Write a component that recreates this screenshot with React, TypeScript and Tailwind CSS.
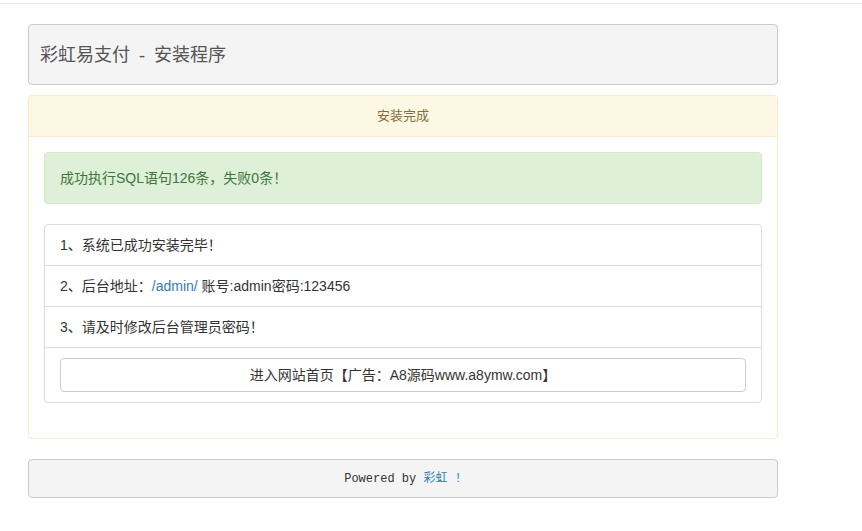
import React from 'react';

const sans = { fontFamily: '"Liberation Sans", "Noto Sans CJK SC", sans-serif' };

export default function App() {
  return (
    <div className="bg-white min-h-screen text-[14px] leading-[20px] text-[#333]" style={sans}>
      <div className="h-[4px] border-b border-[#e7e7e7]" />
      <div className="w-[750px] ml-[28px] pt-[20px]">
        <div className="h-[61px] flex items-center px-[11px] bg-[#f4f4f4] border border-[#cccccc] rounded-[4px]">
          <h1
            className="text-[18px] text-[#555] font-normal"
            style={{ fontFamily: '"Liberation Serif", "Noto Sans CJK SC", serif' }}
          >
            彩虹易支付 &nbsp;-&nbsp; 安装程序
          </h1>
        </div>

        <div className="mt-[10px] border border-[#faebcc] rounded-[4px]">
          <div className="px-[15px] py-[10px] bg-[#fcf8e3] border-b border-[#faebcc] text-[#8a6d3b] text-center text-[13px] rounded-t-[3px]">
            安装完成
          </div>
          <div className="p-[15px]">
            <div className="p-[15px] bg-[#dff0d8] border border-[#d6e9c6] text-[#3c763d] rounded-[4px] mb-[20px]">
              成功执行SQL语句126条，失败0条！
            </div>
            <ul className="border border-[#dddddd] rounded-[4px] mb-[20px]">
              <li className="px-[15px] py-[10px] border-b border-[#dddddd]">1、系统已成功安装完毕！</li>
              <li className="px-[15px] py-[10px] border-b border-[#dddddd]">
                2、后台地址：<span className="text-[#337ab7]">/admin/</span> 账号:admin密码:123456
              </li>
              <li className="px-[15px] py-[10px] border-b border-[#dddddd]">3、请及时修改后台管理员密码！</li>
              <li className="px-[15px] py-[10px]">
                <button className="w-full h-[34px] bg-white border border-[#cccccc] rounded-[4px] text-[#333] text-[14px]">
                  进入网站首页【广告：A8源码www.a8ymw.com】
                </button>
              </li>
            </ul>
          </div>
        </div>

        <div
          className="mt-[20px] h-[39px] flex items-center justify-center bg-[#f4f4f4] border border-[#cccccc] rounded-[4px] text-[12px] text-[#333]"
          style={{ fontFamily: '"Liberation Mono", "Noto Sans CJK SC", monospace' }}
        >
          <span>
            Powered by <span className="text-[#337ab7]">彩虹 !</span>
          </span>
        </div>
      </div>
    </div>
  );
}
